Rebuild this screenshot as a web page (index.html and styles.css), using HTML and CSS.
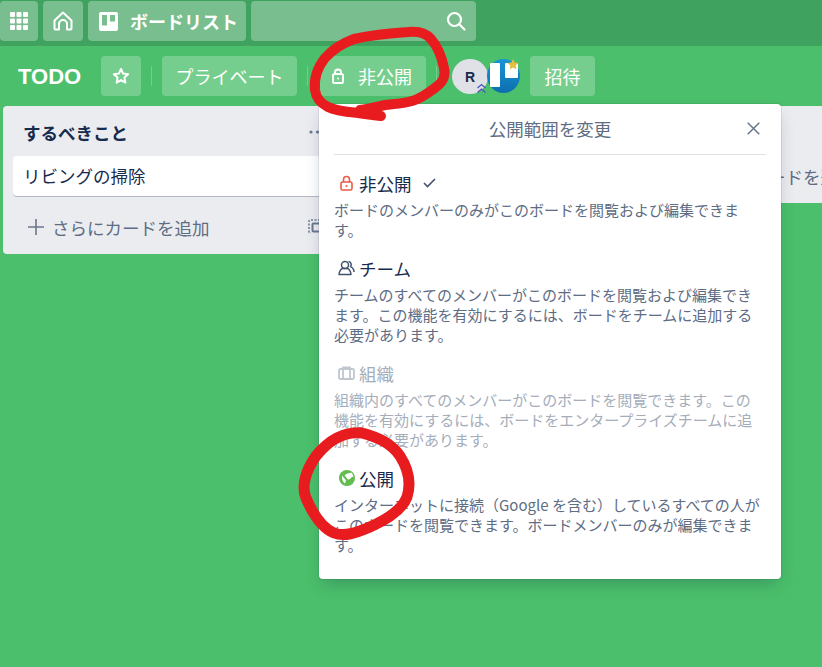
FILE: index.html
```html
<!DOCTYPE html>
<html lang="ja">
<head>
    <meta charset="UTF-8">
    <meta name="viewport" content="width=device-width, initial-scale=1.0">
    <title>TODO</title>
    <link rel="stylesheet" href="styles.css">
</head>
<body>
    <header class="topbar">
        <a class="top-btn apps-btn">
            <svg width="18" height="18" viewBox="0 0 18 18" fill="#fff">
                <rect x="0" y="0" width="5" height="5" rx="1"/><rect x="6.500" y="0" width="5" height="5" rx="1"/><rect x="13" y="0" width="5" height="5" rx="1"/>
                <rect x="0" y="6.500" width="5" height="5" rx="1"/><rect x="6.500" y="6.500" width="5" height="5" rx="1"/><rect x="13" y="6.500" width="5" height="5" rx="1"/>
                <rect x="0" y="13" width="5" height="5" rx="1"/><rect x="6.500" y="13" width="5" height="5" rx="1"/><rect x="13" y="13" width="5" height="5" rx="1"/>
            </svg>
        </a>
        <a class="top-btn home-btn">
            <svg width="20" height="20" viewBox="0 0 20 20" fill="none" stroke="#fff" stroke-width="2" stroke-linejoin="round">
                <path d="M1.500 9.500 10 1.500l8.500 8v8a1 1 0 0 1-1 1h-3.500v-5.500a4 4 0 0 0-8 0V18.500H2.500a1 1 0 0 1-1-1z"/>
            </svg>
        </a>
        <a class="top-btn boards-btn">
            <svg width="19" height="19" viewBox="0 0 19 19">
                <path fill="#fff" fill-rule="evenodd" d="M2 0h15a2 2 0 0 1 2 2v15a2 2 0 0 1-2 2H2a2 2 0 0 1-2-2V2a2 2 0 0 1 2-2zM3 3v10.500h5V3zm8 0v6.500h5V3z"/>
            </svg>
            <span>ボードリスト</span>
        </a>
        <div class="top-search">
            <svg width="20" height="20" viewBox="0 0 20 20" fill="none" stroke="#fff" stroke-width="2.200" stroke-linecap="round">
                <circle cx="8.500" cy="8.500" r="6.500"/><path d="m13.500 13.500 5 5"/>
            </svg>
        </div>
    </header>

    <div class="board-header">
        <h1 class="board-name">TODO</h1>
        <a class="head-btn star-btn">
            <svg width="18" height="18" viewBox="0 0 18 18" fill="none" stroke="#fff" stroke-width="2" stroke-linejoin="round">
                <path d="m9 2 2.100 4.600 5 .6-3.700 3.400 1 5L9 13.100 4.600 15.600l1-5L1.900 7.200l5-.6z"/>
            </svg>
        </a>
        <span class="head-sep"></span>
        <a class="head-btn private-btn">プライベート</a>
        <span class="head-sep"></span>
        <a class="head-btn visibility-btn">
            <svg width="12" height="16" viewBox="0 0 12 16" fill="none" stroke="#fff" stroke-width="2">
                <path d="M3 6V4.500a3 3 0 0 1 6 0V6"/><rect x="1" y="6" width="10" height="9" rx="1.500"/><circle cx="6" cy="10.500" r="1" fill="#fff" stroke="none"/>
            </svg>
            <span>非公開</span>
        </a>
        <span class="head-sep"></span>
        <div class="members">
            <div class="avatar">R
                <svg class="admin-mark" width="11" height="11" viewBox="0 0 11 11" fill="none" stroke="#4a55c0" stroke-width="1.300">
                    <path d="m1.500 5 4-3.500 4 3.500M1.500 9.500l4-3.500 4 3.500"/>
                </svg>
            </div>
            <div class="avatar team-avatar">
                <svg width="33" height="34" viewBox="0 0 33 34">
                    <rect x="3" y="4" width="10" height="24" rx="1" fill="#fff"/>
                    <rect x="18" y="4" width="13" height="15" rx="1" fill="#fff"/>
                    <path fill="#e3bf3f" d="m26 0 1.700 3.400 3.700.5-2.700 2.600.7 3.700-3.400-1.800-3.300 1.800.6-3.700-2.700-2.600 3.800-.5z"/>
                </svg>
            </div>
        </div>
        <a class="head-btn invite-btn">招待</a>
    </div>

    <main class="board">
        <section class="list">
            <div class="list-head">
                <h2>するべきこと</h2>
                <svg class="list-more" width="16" height="4" viewBox="0 0 16 4" fill="#6b778c"><circle cx="2" cy="2" r="1.600"/><circle cx="8.500" cy="2" r="1.600"/><circle cx="15" cy="2" r="1"/></svg>
            </div>
            <div class="card">リビングの掃除</div>
            <div class="add-row">
                <svg width="16" height="16" viewBox="0 0 16 16" stroke="#6b778c" stroke-width="1.600"><path d="M8 0v16M0 8h16"/></svg>
                <span>さらにカードを追加</span>
                <svg class="template-icon" width="16" height="16" viewBox="0 0 16 16" fill="none" stroke="#6b778c" stroke-width="1.500">
                    <path stroke-dasharray="2 1.500" d="M12 1H2a1 1 0 0 0-1 1v11a1 1 0 0 0 1 1h1"/>
                    <rect x="4.500" y="4.500" width="10" height="8" rx="1" stroke-width="2"/>
                </svg>
            </div>
        </section>
        <section class="list">
            <div class="list-head"></div>
        </section>
        <section class="list">
            <div class="list-head"></div>
            <div class="add-row">
                <svg width="16" height="16" viewBox="0 0 16 16" stroke="#6b778c" stroke-width="1.600"><path d="M8 0v16M0 8h16"/></svg>
                <span>さらにカードを追加</span>
            </div>
        </section>
    </main>

    <div class="popover">
        <div class="pop-head">
            <span>公開範囲を変更</span>
            <svg class="pop-close" width="13" height="13" viewBox="0 0 13 13" stroke="#6b778c" stroke-width="1.500"><path d="m.7.7 11.600 11.600M12.300.7.7 12.300"/></svg>
        </div>
        <ul class="pop-list">
            <li class="pop-item">
                <div class="item-title">
                    <span class="item-icon">
                        <svg width="13" height="16" viewBox="0 0 13 16" fill="none" stroke="#eb5a46" stroke-width="1.600">
                            <path d="M3.500 7V4.500a3 3 0 0 1 6 0V7"/><rect x="1" y="7" width="11" height="8" rx="1.500"/><circle cx="6.500" cy="11" r="1.100" fill="#eb5a46" stroke="none"/>
                        </svg>
                    </span>
                    <span>非公開</span>
                    <svg class="check" width="13" height="10" viewBox="0 0 13 10" fill="none" stroke="#42526e" stroke-width="1.600"><path d="m1 5 3.500 3.500L12 1"/></svg>
                </div>
                <p>ボードのメンバーのみがこのボードを閲覧および編集できます。</p>
            </li>
            <li class="pop-item">
                <div class="item-title">
                    <span class="item-icon">
                        <svg width="17" height="16" viewBox="0 0 17 16" fill="none" stroke="#42526e" stroke-width="1.500" stroke-linejoin="round">
                            <circle cx="7" cy="5" r="3.500"/><path d="M1 14.500c0-3 2-5.500 3.500-6h5c1.500.5 3.500 3 3.500 6z"/><path d="M10.500 1.600a3 3 0 0 1 2 5c1.800.8 3.500 2.600 3.500 5.400"/>
                        </svg>
                    </span>
                    <span>チーム</span>
                </div>
                <p>チームのすべてのメンバーがこのボードを閲覧および編集できます。この機能を有効にするには、ボードをチームに追加する必要があります。</p>
            </li>
            <li class="pop-item disabled">
                <div class="item-title">
                    <span class="item-icon">
                        <svg width="17" height="14" viewBox="0 0 17 14" fill="none" stroke="#c1c7d0" stroke-width="1.800">
                            <rect x="1" y="3" width="15" height="10" rx="1.500"/><path d="M5 13V1.500h7V13"/>
                        </svg>
                    </span>
                    <span>組織</span>
                </div>
                <p>組織内のすべてのメンバーがこのボードを閲覧できます。この機能を有効にするには、ボードをエンタープライズチームに追加する必要があります。</p>
            </li>
            <li class="pop-item">
                <div class="item-title">
                    <span class="item-icon">
                        <svg width="16" height="16" viewBox="0 0 16 16">
                            <circle cx="8" cy="8" r="8" fill="#61bd4f"/>
                            <path fill="#fff" d="M5.500 5.500C7.500 3.500 11 2.500 13 3l1.500 3.500c-2 .5-3 2.500-5 3-1 .2-1.500-1.500-4-4zM3 5.500c1 2 3 3 4 5l-1 3c-2-1.500-3.500-4-3-8z"/>
                        </svg>
                    </span>
                    <span>公開</span>
                </div>
                <p>インターネットに接続（Google を含む）しているすべての人がこのボードを閲覧できます。ボードメンバーのみが編集できます。</p>
            </li>
        </ul>
    </div>

    <svg class="scribbles" width="822" height="667" viewBox="0 0 822 667" fill="none" stroke="#e81c1f" stroke-linecap="round" stroke-linejoin="round">
        <path stroke-width="10" d="M381 116C372 115 365 114 358 113 348 112 336 111 328 107 320 103 316 98 315 90 314 80 317 68 325 58 333 49 343 43 354 39 372 35 392 33 408 32 418 31 426 33 431 39 438 47 442 58 444 68 446 77 443 82 436 87 428 93 422 98 412 101 402 104 392 104 385 105 376 107 368 109 360 110"/>
        <path stroke-width="11" d="M362 433C378 437 392 444 400 456 409 470 411 484 407 497 402 510 388 519 370 527 356 533 344 537 334 533 322 528 312 512 306 498 301 486 306 470 316 456 328 441 344 431 362 433Z"/>
    </svg>
</body>
</html>
```

FILE: styles.css
```css
* {
    box-sizing: border-box;
}
body {
    font-family: "Noto Sans CJK JP", "Noto Sans", sans-serif;
    background-color: #4bbf6b;
    margin: 0;
    width: 822px;
    height: 667px;
    overflow: hidden;
    position: relative;
    color: #172b4d;
}
h1, h2, p, ul {
    margin: 0;
    padding: 0;
}
ul {
    list-style: none;
}

/* top bar */
.topbar {
    height: 46px;
    background-color: #3fa35f;
    display: flex;
    gap: 5px;
    padding-top: 1px;
}
.top-btn {
    height: 40px;
    background-color: rgba(255, 255, 255, 0.3);
    border-radius: 4px;
    display: flex;
    align-items: center;
    justify-content: center;
    color: #fff;
}
.apps-btn {
    width: 38px;
}
.home-btn {
    width: 40px;
}
.boards-btn {
    width: 158px;
    justify-content: flex-start;
    padding-left: 11px;
    gap: 12px;
    font-size: 18px;
    font-weight: 700;
}
.top-search {
    width: 225px;
    height: 40px;
    background-color: rgba(255, 255, 255, 0.3);
    border-radius: 4px;
    display: flex;
    align-items: center;
    justify-content: flex-end;
    padding-right: 10px;
}

/* board header */
.board-header {
    height: 60px;
    padding: 10px 0 0 18px;
    display: flex;
    align-items: flex-start;
    color: #fff;
}
.board-name {
    width: 83px;
    height: 40px;
    line-height: 42px;
    font-family: "Liberation Sans", sans-serif;
    font-size: 22px;
    font-weight: 700;
}
.head-btn {
    height: 40px;
    background-color: rgba(255, 255, 255, 0.24);
    border-radius: 4px;
    display: flex;
    align-items: center;
    justify-content: center;
    font-size: 18px;
}
.star-btn {
    width: 40px;
}
.head-sep {
    width: 1px;
    height: 20px;
    margin: 10px 10px 0;
    background-color: rgba(255, 255, 255, 0.24);
}
.private-btn {
    width: 135px;
}
.visibility-btn {
    width: 106px;
    margin-left: 2px;
    gap: 14px;
    padding-right: 2px;
}
.members {
    display: flex;
    margin-left: 5px;
    margin-top: 3px;
}
.avatar {
    width: 36px;
    height: 35px;
    border-radius: 50%;
    background-color: #dfe1e6;
    color: #172b4d;
    font-family: "Liberation Sans", sans-serif;
    font-size: 14px;
    font-weight: 700;
    display: flex;
    align-items: center;
    justify-content: center;
    position: relative;
}
.admin-mark {
    position: absolute;
    right: 1px;
    bottom: 0;
}
.team-avatar {
    width: 33px;
    height: 34px;
    margin-left: -1px;
    background: linear-gradient(#1a94d6, #0d6fae);
}
.invite-btn {
    width: 65px;
    margin-left: 10px;
}

/* lists */
.board {
    display: flex;
    gap: 3px;
    padding-left: 3px;
    align-items: flex-start;
}
.list {
    flex: 0 0 320px;
    background-color: #ebecf0;
    border-radius: 4px;
    padding-bottom: 7px;
}
.list-head {
    height: 50px;
    padding: 2px 0 0 20px;
    display: flex;
    justify-content: space-between;
    align-items: center;
}
.list-head h2 {
    font-size: 17.500px;
    font-weight: 700;
    color: #172b4d;
}
.list-more {
    margin-right: -2px;
}
.card {
    margin: 0 0 11px 10px;
    height: 40px;
    line-height: 40px;
    padding-left: 10px;
    background-color: #fff;
    border-radius: 4px;
    box-shadow: 0 1px 0 rgba(9, 30, 66, 0.25);
    font-size: 17.500px;
    color: #172b4d;
}
.add-row {
    height: 40px;
    padding-left: 25px;
    display: flex;
    align-items: center;
    gap: 8px;
    color: #5e6c84;
    font-size: 17.500px;
    position: relative;
    white-space: nowrap;
}
.template-icon {
    position: absolute;
    left: 305px;
    top: 12px;
}

/* visibility popover */
.popover {
    position: absolute;
    left: 319px;
    top: 104px;
    width: 462px;
    height: 475px;
    background-color: #fff;
    border-radius: 4px;
    box-shadow: 0 8px 16px -4px rgba(9, 30, 66, 0.25), 0 0 0 1px rgba(9, 30, 66, 0.08);
    padding: 0 15px;
}
.pop-head {
    height: 51px;
    border-bottom: 1px solid #dfe1e6;
    display: flex;
    align-items: center;
    justify-content: center;
    color: #5e6c84;
    font-size: 17.500px;
    padding-bottom: 2px;
    position: relative;
}
.pop-close {
    position: absolute;
    right: 6px;
    top: 18px;
}
.pop-list {
    padding-top: 13px;
}
.pop-item {
    margin-bottom: 13px;
}
.item-title {
    height: 30px;
    display: flex;
    align-items: center;
    padding-left: 4px;
    font-size: 17.500px;
    color: #172b4d;
}
.item-icon {
    width: 17px;
    margin-right: 4px;
    display: flex;
    justify-content: center;
}
.check {
    margin-left: 11px;
}
.pop-item p {
    max-width: 428px;
    margin-top: 2px;
    font-size: 15px;
    line-height: 20px;
    color: #5e6c84;
}
.disabled .item-title,
.disabled p {
    color: #a5adba;
}

.scribbles {
    position: absolute;
    left: 0;
    top: 0;
}
```
